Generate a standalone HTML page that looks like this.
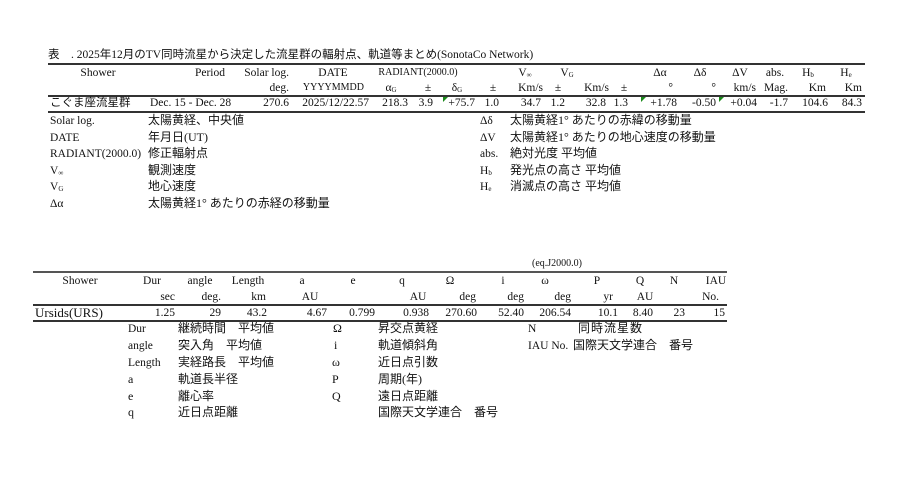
<!DOCTYPE html>
<html><head><meta charset="utf-8"><style>
body{margin:0;width:900px;height:486px;background:#fff;position:relative;overflow:hidden;font-family:"Liberation Serif","Noto Serif CJK SC",serif;color:#111}
s{position:absolute;text-decoration:none;font-size:11.5px;line-height:14px;white-space:nowrap}
.j{font-family:"Liberation Serif","Noto Sans CJK JP",sans-serif;font-size:12px}
.c{transform:translateX(-50%)}
.ln{position:absolute;background:#333}
.tri{position:absolute;width:0;height:0;border-top:5px solid #1a8a1a;border-right:5px solid transparent}
sub{font-size:7px;vertical-align:-1px}
</style></head><body>
<!-- Top table -->
<s class="j" style="left:48px;top:48px;font-size:11.5px">表　. 2025年12月のTV同時流星から決定した流星群の輻射点、軌道等まとめ(SonotaCo Network)</s>
<div class="ln" style="left:48px;top:63px;width:817px;height:2px"></div>
<s class="c" style="left:98px;top:66px">Shower</s>
<s style="right:675px;top:66px">Period</s>
<s style="right:611px;top:66px">Solar log.</s>
<s class="c" style="left:333px;top:66px">DATE</s>
<s class="c" style="left:418px;top:66px;font-size:10px">RADIANT(2000.0)</s>
<s class="c" style="left:525px;top:66px">V<sub>∞</sub></s>
<s class="c" style="left:567px;top:66px">V<sub>G</sub></s>
<s class="c" style="left:660px;top:66px">Δα</s>
<s class="c" style="left:700px;top:66px">Δδ</s>
<s class="c" style="left:740px;top:66px">ΔV</s>
<s class="c" style="left:775px;top:66px">abs.</s>
<s class="c" style="left:808px;top:66px">H<sub>b</sub></s>
<s class="c" style="left:846px;top:66px">H<sub>e</sub></s>

<s style="right:611px;top:81px">deg.</s>
<s style="right:536px;top:81px;font-size:10px">YYYYMMDD</s>
<s class="c" style="left:391px;top:81px">α<sub>G</sub></s>
<s class="c" style="left:428px;top:81px">±</s>
<s class="c" style="left:457px;top:81px">δ<sub>G</sub></s>
<s class="c" style="left:493px;top:81px">±</s>
<s style="right:357px;top:81px">Km/s</s>
<s class="c" style="left:558px;top:81px">±</s>
<s style="right:291px;top:81px">Km/s</s>
<s class="c" style="left:624px;top:81px">±</s>
<s style="right:227px;top:81px">°</s>
<s style="right:184px;top:81px">°</s>
<s style="right:144px;top:81px">km/s</s>
<s style="right:112px;top:81px">Mag.</s>
<s style="right:74px;top:81px">Km</s>
<s style="right:38px;top:81px">Km</s>
<div class="ln" style="left:48px;top:95px;width:817px;height:2px"></div>
<div class="tri" style="left:443px;top:97px"></div>
<div class="tri" style="left:641px;top:97px"></div>
<div class="tri" style="left:719px;top:97px"></div>
<s class="j" style="left:50px;top:96px;font-size:11.5px">こぐま座流星群</s>
<s style="left:150px;top:96px">Dec. 15 - Dec. 28</s>
<s style="right:611px;top:96px">270.6</s>
<s style="right:531px;top:96px">2025/12/22.57</s>
<s style="right:492px;top:96px">218.3</s>
<s style="right:467px;top:96px">3.9</s>
<s style="right:425px;top:96px">+75.7</s>
<s style="right:401px;top:96px">1.0</s>
<s style="right:359px;top:96px">34.7</s>
<s style="right:335px;top:96px">1.2</s>
<s style="right:294px;top:96px">32.8</s>
<s style="right:272px;top:96px">1.3</s>
<s style="right:223px;top:96px">+1.78</s>
<s style="right:184px;top:96px">-0.50</s>
<s style="right:143px;top:96px">+0.04</s>
<s style="right:112px;top:96px">-1.7</s>
<s style="right:72px;top:96px">104.6</s>
<s style="right:38px;top:96px">84.3</s>
<div class="ln" style="left:48px;top:111px;width:817px;height:1.5px"></div>

<s style="left:50px;top:114px">Solar log.</s><s class="j" style="left:148px;top:113px">太陽黄経、中央値</s>
<s style="left:50px;top:131px">DATE</s><s class="j" style="left:148px;top:130px">年月日(UT)</s>
<s style="left:50px;top:147px">RADIANT(2000.0)</s><s class="j" style="left:148px;top:146px">修正輻射点</s>
<s style="left:50px;top:164px">V<sub>∞</sub></s><s class="j" style="left:148px;top:163px">観測速度</s>
<s style="left:50px;top:180px">V<sub>G</sub></s><s class="j" style="left:148px;top:179px">地心速度</s>
<s style="left:50px;top:197px">Δα</s><s class="j" style="left:148px;top:196px">太陽黄経1° あたりの赤経の移動量</s>
<s style="left:480px;top:114px">Δδ</s><s class="j" style="left:510px;top:113px">太陽黄経1° あたりの赤緯の移動量</s>
<s style="left:480px;top:131px">ΔV</s><s class="j" style="left:510px;top:130px">太陽黄経1° あたりの地心速度の移動量</s>
<s style="left:480px;top:147px">abs.</s><s class="j" style="left:510px;top:146px">絶対光度 平均値</s>
<s style="left:480px;top:164px">H<sub>b</sub></s><s class="j" style="left:510px;top:163px">発光点の高さ 平均値</s>
<s style="left:480px;top:180px">H<sub>e</sub></s><s class="j" style="left:510px;top:179px">消滅点の高さ 平均値</s>

<!-- Bottom table -->
<s class="c" style="left:557px;top:257px;font-size:10px">(eq.J2000.0)</s>
<div class="ln" style="left:33px;top:271px;width:694px;height:2px;background:#555"></div>
<s class="c" style="left:80px;top:274px">Shower</s>
<s class="c" style="left:152px;top:274px">Dur</s>
<s class="c" style="left:200px;top:274px">angle</s>
<s class="c" style="left:248px;top:274px">Length</s>
<s class="c" style="left:302px;top:274px">a</s>
<s class="c" style="left:353px;top:274px">e</s>
<s class="c" style="left:402px;top:274px">q</s>
<s class="c" style="left:450px;top:274px">Ω</s>
<s class="c" style="left:503px;top:274px">i</s>
<s class="c" style="left:545px;top:274px">ω</s>
<s class="c" style="left:597px;top:274px">P</s>
<s class="c" style="left:640px;top:274px">Q</s>
<s class="c" style="left:674px;top:274px">N</s>
<s class="c" style="left:716px;top:274px">IAU</s>
<s style="right:725px;top:290px">sec</s>
<s style="right:679px;top:290px">deg.</s>
<s style="right:634px;top:290px">km</s>
<s class="c" style="left:310px;top:290px">AU</s>
<s class="c" style="left:418px;top:290px">AU</s>
<s style="right:424px;top:290px">deg</s>
<s style="right:376px;top:290px">deg</s>
<s style="right:329px;top:290px">deg</s>
<s style="right:287px;top:290px">yr</s>
<s class="c" style="left:645px;top:290px">AU</s>
<s style="right:181px;top:290px">No.</s>
<div class="ln" style="left:33px;top:304px;width:694px;height:2px"></div>
<s style="left:35px;top:305px;font-size:13px;line-height:16px">Ursids(URS)</s>
<s style="right:725px;top:306px">1.25</s>
<s style="right:679px;top:306px">29</s>
<s style="right:633px;top:306px">43.2</s>
<s style="right:573px;top:306px">4.67</s>
<s style="right:525px;top:306px">0.799</s>
<s style="right:471px;top:306px">0.938</s>
<s style="right:423px;top:306px">270.60</s>
<s style="right:376px;top:306px">52.40</s>
<s style="right:329px;top:306px">206.54</s>
<s style="right:282px;top:306px">10.1</s>
<s style="right:247px;top:306px">8.40</s>
<s style="right:215px;top:306px">23</s>
<s style="right:175px;top:306px">15</s>
<div class="ln" style="left:33px;top:320px;width:694px;height:1.5px"></div>

<s style="left:128px;top:322px">Dur</s><s class="j" style="left:178px;top:321px">継続時間　平均値</s>
<s style="left:128px;top:339px">angle</s><s class="j" style="left:178px;top:338px">突入角　平均値</s>
<s style="left:128px;top:356px">Length</s><s class="j" style="left:178px;top:355px">実経路長　平均値</s>
<s class="j" style="left:128px;top:372px">a</s><s class="j" style="left:178px;top:372px">軌道長半径</s>
<s class="j" style="left:128px;top:389px">e</s><s class="j" style="left:178px;top:389px">離心率</s>
<s class="j" style="left:128px;top:405px">q</s><s class="j" style="left:178px;top:405px">近日点距離</s>
<s class="j" style="left:333px;top:321px">Ω</s><s class="j" style="left:378px;top:321px">昇交点黄経</s>
<s class="j" style="left:334px;top:338px">i</s><s class="j" style="left:378px;top:338px">軌道傾斜角</s>
<s class="j" style="left:332px;top:355px">ω</s><s class="j" style="left:378px;top:355px">近日点引数</s>
<s class="j" style="left:332px;top:372px">P</s><s class="j" style="left:378px;top:372px">周期(年)</s>
<s class="j" style="left:332px;top:389px">Q</s><s class="j" style="left:378px;top:389px">遠日点距離</s>
<s class="j" style="left:378px;top:405px">国際天文学連合　番号</s>
<s style="left:528px;top:322px">N</s><s class="j" style="left:578px;top:321px;letter-spacing:1px">同時流星数</s>
<s style="left:528px;top:339px">IAU No.</s><s class="j" style="left:573px;top:338px">国際天文学連合　番号</s>
</body></html>
